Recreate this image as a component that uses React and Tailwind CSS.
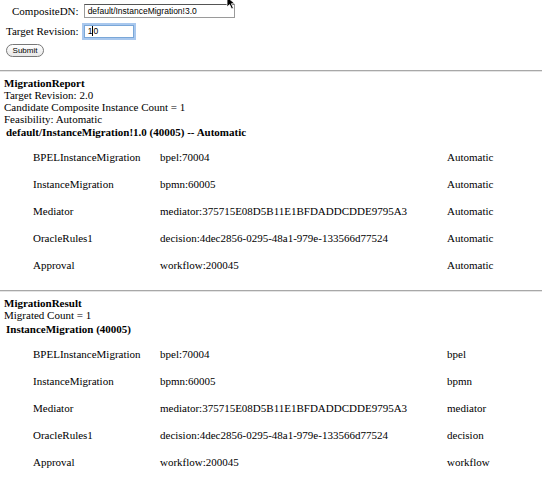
import React from 'react';

const reportRows = [
  ['BPELInstanceMigration', 'bpel:70004', 'Automatic'],
  ['InstanceMigration', 'bpmn:60005', 'Automatic'],
  ['Mediator', 'mediator:375715E08D5B11E1BFDADDCDDE9795A3', 'Automatic'],
  ['OracleRules1', 'decision:4dec2856-0295-48a1-979e-133566d77524', 'Automatic'],
  ['Approval', 'workflow:200045', 'Automatic'],
];

const resultRows = [
  ['BPELInstanceMigration', 'bpel:70004', 'bpel'],
  ['InstanceMigration', 'bpmn:60005', 'bpmn'],
  ['Mediator', 'mediator:375715E08D5B11E1BFDADDCDDE9795A3', 'mediator'],
  ['OracleRules1', 'decision:4dec2856-0295-48a1-979e-133566d77524', 'decision'],
  ['Approval', 'workflow:200045', 'workflow'],
];

const Rows = ({ rows }) => (
  <div className="pl-[33px]">
    {rows.map((r) => (
      <div key={r[0]} className="grid grid-cols-[127px_287px_1fr] h-[27px] items-center whitespace-nowrap">
        <span>{r[0]}</span>
        <span>{r[1]}</span>
        <span>{r[2]}</span>
      </div>
    ))}
  </div>
);

const Rule = () => (
  <div className="border-t-[1px] border-[#a8a8a8] border-b-[1px] border-b-[#e4e4e4]" />
);

export default function App() {
  return (
    <div className="relative w-[542px] h-[482px] overflow-hidden bg-white text-black font-['Liberation_Serif',serif] text-[11px] leading-[12px]">
      {/* mouse pointer */}
      <svg className="absolute left-[226px] top-[-4px]" width="12" height="14" viewBox="0 0 12 14">
        <path d="M1 1 L1 11 L3.6 8.6 L5.6 13 L7.4 12.2 L5.4 7.8 L9 7.8 Z" fill="#000" stroke="#fff" strokeWidth="0.8" />
      </svg>

      {/* form */}
      <div className="pt-[4px]">
        <div className="flex items-center h-[14px] pl-[12px] gap-[5px]">
          <span className="shrink-0 whitespace-nowrap text-[11px]">CompositeDN:</span>
          <div className="w-[151px] h-[14px] border border-[#9a9a9a] border-t-[#555] flex items-center pl-[3px] font-['Liberation_Sans',sans-serif] text-[8.5px] whitespace-nowrap">
            default/InstanceMigration!3.0
          </div>
        </div>
        <div className="flex items-center h-[14px] pl-[6px] mt-[6px] gap-[5px]">
          <span className="shrink-0 whitespace-nowrap text-[11px]">Target Revision:</span>
          <div className="w-[50px] h-[13px] border border-[#7aa7d8] shadow-[0_0_0_2px_#a9c8ee] flex items-center pl-[3px] font-['Liberation_Sans',sans-serif] text-[8.5px]">
            1<span className="inline-block w-px h-[10px] bg-black" />0
          </div>
        </div>
        <div className="mt-[6px] ml-[6px] w-[38px] h-[13px] rounded-full border border-[#777] bg-gradient-to-b from-white to-[#e8e8e8] flex items-center justify-center font-['Liberation_Sans',sans-serif] text-[8px]">
          Submit
        </div>
      </div>

      <div className="mt-[13px]">
        <Rule />
      </div>

      {/* report */}
      <div className="pl-[4px] mt-[5px]">
        <div className="font-bold">MigrationReport</div>
        <div>Target Revision: 2.0</div>
        <div>Candidate Composite Instance Count = 1</div>
        <div>Feasibility: Automatic</div>
      </div>
      <div className="pl-[6px] font-bold leading-[14px]">default/InstanceMigration!1.0 (40005) -- Automatic</div>
      <div className="mt-[4px]">
        <Rows rows={reportRows} />
      </div>

      <div className="mt-[12px]">
        <Rule />
      </div>

      {/* result */}
      <div className="pl-[4px] mt-[5px]">
        <div className="font-bold">MigrationResult</div>
        <div>Migrated Count = 1</div>
      </div>
      <div className="pl-[6px] font-bold leading-[14px] mt-[1px]">InstanceMigration (40005)</div>
      <div className="mt-[4px]">
        <Rows rows={resultRows} />
      </div>
    </div>
  );
}
